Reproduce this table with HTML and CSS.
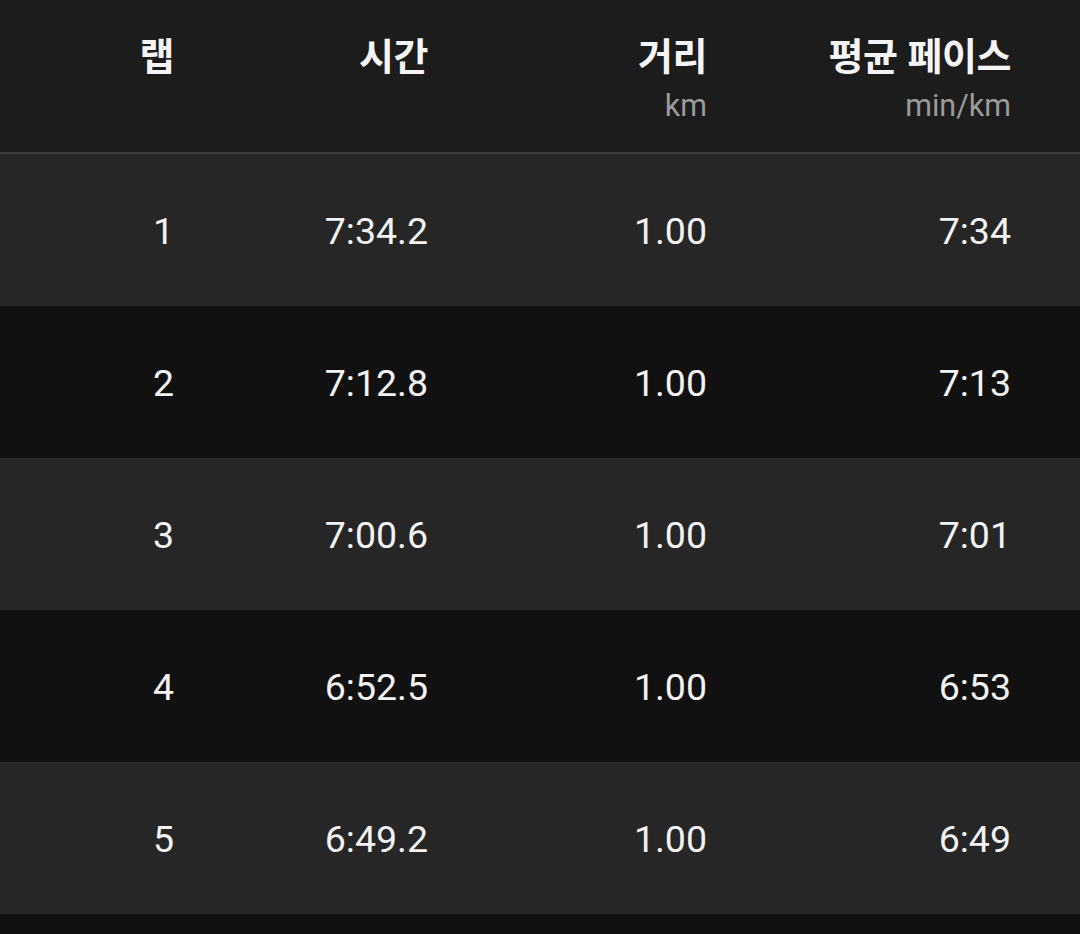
FILE: index.html
```
<!DOCTYPE html>
<html lang="ko">
<head>
<meta charset="utf-8">
<link rel="stylesheet" href="styles.css">
</head>
<body>
<div class="laps">
  <div class="head">
    <div class="hcell"><div class="title">랩</div></div>
    <div class="hcell"><div class="title">시간</div></div>
    <div class="hcell"><div class="title">거리</div><div class="unit">km</div></div>
    <div class="hcell"><div class="title">평균 페이스</div><div class="unit">min/km</div></div>
  </div>
  <div class="row light"><div class="cell">1</div><div class="cell">7:34.2</div><div class="cell">1.00</div><div class="cell">7:34</div></div>
  <div class="row dark"><div class="cell">2</div><div class="cell">7:12.8</div><div class="cell">1.00</div><div class="cell">7:13</div></div>
  <div class="row light"><div class="cell">3</div><div class="cell">7:00.6</div><div class="cell">1.00</div><div class="cell">7:01</div></div>
  <div class="row dark"><div class="cell">4</div><div class="cell">6:52.5</div><div class="cell">1.00</div><div class="cell">6:53</div></div>
  <div class="row light"><div class="cell">5</div><div class="cell">6:49.2</div><div class="cell">1.00</div><div class="cell">6:49</div></div>
  <div class="row dark"></div>
</div>
</body>
</html>
```
FILE: styles.css
```
html, body {
  margin: 0;
  padding: 0;
  background: #111111;
}
.laps {
  width: 1080px;
  height: 934px;
  overflow: hidden;
}
.head, .row {
  display: grid;
  grid-template-columns: 174px 254px 279px 304px 69px;
}
.head {
  height: 152px;
  background: #1c1c1c;
  border-bottom: 2px solid #3c3c3c;
}
.hcell {
  display: flex;
  flex-direction: column;
  align-items: flex-end;
  padding-top: 30px;
}
.title {
  font-family: "Noto Sans CJK KR", "Noto Sans", sans-serif;
  font-weight: 700;
  font-size: 38px;
  line-height: 48px;
  color: #f4f4f4;
  letter-spacing: -0.5px;
}
.unit {
  font-family: Roboto, "Liberation Sans", sans-serif;
  font-size: 30.5px;
  line-height: 40px;
  color: #9a9a9a;
  margin-top: 8px;
}
.row {
  height: 152px;
  align-items: center;
}
.row.light { background: #262626; }
.row.dark { background: #111111; }
.cell {
  text-align: right;
  font-family: Roboto, "Liberation Sans", sans-serif;
  font-size: 37.5px;
  line-height: 44px;
  padding-top: 1px;
  color: #f2f2f2;
}
```
